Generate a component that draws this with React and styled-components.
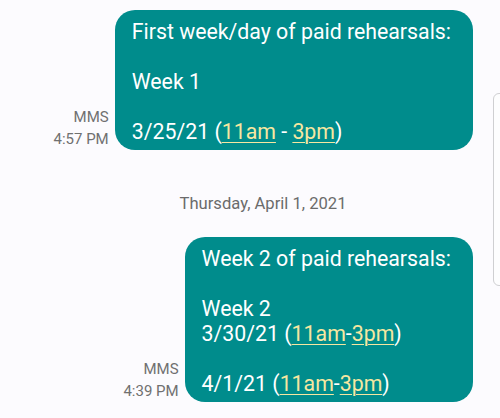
import React from "react";
import styled, { createGlobalStyle } from "styled-components";

const GlobalStyle = createGlobalStyle`
  html, body {
    margin: 0;
    padding: 0;
    background: #fcfbfe;
    font-family: Roboto, "Noto Sans", sans-serif;
    overflow: hidden;
  }
`;

const Screen = styled.div`
  position: relative;
  width: 500px;
  height: 418px;
  background: #fcfbfe;
  padding-top: 10px;
  box-sizing: border-box;
  overflow: hidden;
`;

const Row = styled.div`
  display: flex;
  justify-content: flex-end;
  align-items: flex-end;
  gap: 6px;
  padding-right: 27px;
`;

const Meta = styled.div`
  text-align: right;
  color: #707070;
  font-size: 15px;
  line-height: 22px;
`;

const Bubble = styled.div`
  background: #008c8c;
  color: #fff;
  border-radius: 20px;
  padding: 9px 22px 6px 17px;
  font-size: 21.3px;
  line-height: 25px;
  white-space: pre-line;
`;

const Range = styled.span`
  white-space: nowrap;
`;

const Time = styled.span`
  color: #f6e7a1;
  text-decoration: underline;
  text-decoration-thickness: 1px;
  text-underline-offset: 3px;
`;

const DateLabel = styled.div`
  text-align: center;
  color: #6b6b6b;
  font-size: 16.6px;
  line-height: 20px;
  padding: 44px 0 23px 26px;
`;

const ScrollHandle = styled.div`
  position: absolute;
  left: 493px;
  top: 93px;
  width: 20px;
  height: 191px;
  border: 1px solid #cfcfd2;
  border-radius: 6px;
  background: #fdfdfe;
`;

const TimeRange = ({ from, to, sep }) => (
  <Range>
    (<Time>{from}</Time>
    {sep}
    <Time>{to}</Time>)
  </Range>
);

export default function App() {
  return (
    <>
      <GlobalStyle />
      <Screen>
        <Row>
          <Meta>
            MMS
            <br />
            4:57 PM
          </Meta>
          <Bubble>
            {"First week/day of paid rehearsals:\n\nWeek 1\n\n3/25/21 "}
            <TimeRange from="11am" to="3pm" sep=" - " />
          </Bubble>
        </Row>
        <DateLabel>Thursday, April 1, 2021</DateLabel>
        <Row>
          <Meta>
            MMS
            <br />
            4:39 PM
          </Meta>
          <Bubble>
            {"Week 2 of paid rehearsals:\n\nWeek 2\n3/30/21 "}
            <TimeRange from="11am" to="3pm" sep="-" />
            {"\n\n4/1/21 "}
            <TimeRange from="11am" to="3pm" sep="-" />
          </Bubble>
        </Row>
        <ScrollHandle />
      </Screen>
    </>
  );
}
